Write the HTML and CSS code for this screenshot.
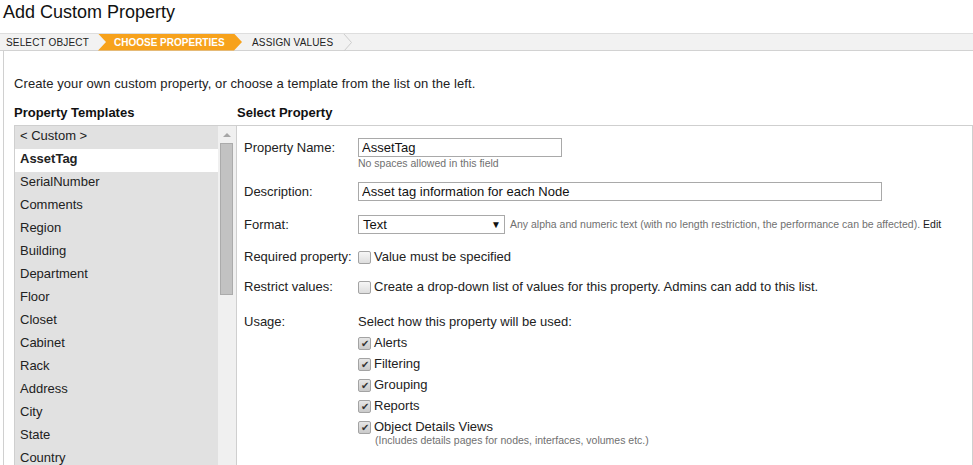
FILE: index.html
```html
<!DOCTYPE html>
<html>
	<head>
		<meta charset="UTF-8">
		<title>Add Custom Property</title>
		<link rel="stylesheet" href="styles.css">
	</head>
	<body>
		<h1 class="title">Add Custom Property</h1>
		<div class="steps">
			<span class="step first">Select Object</span>
			<span class="step current">Choose Properties</span>
			<span class="step">Assign Values</span>
			<svg class="chev" width="10" height="17" viewBox="0 0 10 17"><polyline points="1,0 8.5,8.5 1,17" fill="none" stroke="#cdcdcd"/></svg>
		</div>
		<div class="panel">
			<p class="intro">Create your own custom property, or choose a template from the list on the left.</p>
			<div class="cols">
				<h2>Property Templates</h2>
				<h2>Select Property</h2>
				<div class="templates">
					<ul class="tlist">
						<li>&lt; Custom &gt;</li>
						<li class="sel">AssetTag</li>
						<li>SerialNumber</li>
						<li>Comments</li>
						<li>Region</li>
						<li>Building</li>
						<li>Department</li>
						<li>Floor</li>
						<li>Closet</li>
						<li>Cabinet</li>
						<li>Rack</li>
						<li>Address</li>
						<li>City</li>
						<li>State</li>
						<li>Country</li>
					</ul>
					<div class="scroll">
						<div class="up"></div>
						<div class="thumb"></div>
					</div>
				</div>
				<div class="form">
					<div class="row r1">
						<span class="lbl">Property Name:</span>
						<div>
							<input class="txt name" type="text" value="AssetTag">
							<div class="hint">No spaces allowed in this field</div>
						</div>
					</div>
					<div class="row r2">
						<span class="lbl">Description:</span>
						<input class="txt desc" type="text" value="Asset tag information for each Node">
					</div>
					<div class="row r3">
						<span class="lbl">Format:</span>
						<div class="select"><span>Text</span><span class="arr">&#9660;</span></div>
						<span class="hint side">Any alpha and numeric text (with no length restriction, the performance can be affected). <a class="edit">Edit</a></span>
					</div>
					<div class="row chk r4">
						<span class="lbl">Required property:</span>
						<span class="cb"></span>Value must be specified
					</div>
					<div class="row chk r5">
						<span class="lbl">Restrict values:</span>
						<span class="cb"></span>Create a drop-down list of values for this property. Admins can add to this list.
					</div>
					<div class="row chk">
						<span class="lbl">Usage:</span>
						<div class="usage">
							<div>Select how this property will be used:</div>
							<div class="opt"><span class="cb on"></span>Alerts</div>
							<div class="opt"><span class="cb on"></span>Filtering</div>
							<div class="opt"><span class="cb on"></span>Grouping</div>
							<div class="opt"><span class="cb on"></span>Reports</div>
							<div class="opt"><span class="cb on"></span>Object Details Views</div>
							<div class="hint note">(Includes details pages for nodes, interfaces, volumes etc.)</div>
						</div>
					</div>
				</div>
			</div>
		</div>
	</body>
</html>
```

FILE: styles.css
```css
*{
	margin: 0;
	padding: 0;
	box-sizing: border-box;
}
html,body{
	height: 100%;
	overflow: hidden;
}
body{
	font-family: Arial, "Liberation Sans", sans-serif;
	font-size: 13px;
	color: #222;
	background: #fff;
}
.title{
	font-size: 18px;
	font-weight: normal;
	line-height: 24px;
	height: 33px;
	padding-left: 3px;
	color: #111;
}
/* steps bar */
.steps{
	display: flex;
	align-items: center;
	height: 18px;
	background: #f2f2f2;
	border-top: 1px solid #dedede;
	border-bottom: 1px solid #d2d2d2;
	font-size: 10px;
	letter-spacing: 0.15px;
	text-transform: uppercase;
	color: #222;
}
.step{
	line-height: 17px;
	height: 17px;
}
.first{
	width: 98px;
	padding-left: 6px;
}
.current{
	width: 144px;
	padding-left: 16px;
	letter-spacing: 0;
	background: #f7a21c;
	color: #fff;
	font-weight: bold;
	clip-path: polygon(0 0, 136px 0, 144px 50%, 136px 100%, 0 100%, 8px 50%);
	margin-right: 10px;
}
.chev{
	margin-left: 10px;
}
/* panel */
.panel{
	margin-left: 3px;
	border-left: 1px solid #d0d0d0;
	padding-left: 10px;
	height: 100%;
}
.intro{
	padding-top: 25px;
	line-height: 16px;
	letter-spacing: 0.08px;
}
.cols{
	display: grid;
	grid-template-columns: 222px 1fr;
	margin-top: 13px;
}
h2{
	font-size: 13px;
	font-weight: bold;
	line-height: 16px;
	margin-bottom: 4px;
	color: #111;
}
h2:nth-child(2){
	padding-left: 1px;
}
.templates{
	display: flex;
	height: 340px;
	border-left: 1px solid #cfcfcf;
	border-top: 1px solid #cfcfcf;
	overflow: hidden;
}
.tlist{
	width: 203px;
	list-style: none;
	background: #e1e1e1;
}
.tlist li{
	height: 23px;
	line-height: 19px;
	padding-left: 5px;
}
.tlist .sel{
	background: #fff;
	font-weight: bold;
}
.scroll{
	width: 18px;
	background: #f0f0f0;
	padding-left: 2px;
}
.up{
	width: 0;
	height: 0;
	margin: 7px 0 0 3px;
	border-left: 4px solid transparent;
	border-right: 4px solid transparent;
	border-bottom: 4px solid #a6a6a6;
}
.thumb{
	width: 13px;
	height: 152px;
	margin-top: 6px;
	background: #c2c2c2;
	border: 1px solid #ababab;
}
/* form */
.form{
	height: 340px;
	border: 1px solid #cfcfcf;
	border-bottom: 0;
	padding: 12px 0 0 7px;
}
.row{
	display: flex;
	align-items: flex-start;
	margin-bottom: 14px;
	line-height: 19px;
}
.r1{
	margin-bottom: 13px;
}
.lbl{
	width: 114px;
	flex: none;
}
.txt{
	display: block;
	height: 19px;
	border: 1px solid #a9a9a9;
	font-family: Arial, "Liberation Sans", sans-serif;
	font-size: 13px;
	color: #111;
	padding: 0 3px;
	outline: none;
}
.name{
	width: 204px;
}
.desc{
	width: 524px;
}
.hint{
	font-size: 10.5px;
	line-height: 12px;
	color: #707070;
}
.side{
	line-height: 19px;
	margin-left: 5px;
}
.edit{
	color: #1a1a1a;
}
.select{
	display: flex;
	justify-content: space-between;
	width: 147px;
	height: 19px;
	border: 1px solid #a9a9a9;
	padding: 0 3px 0 4px;
	line-height: 17px;
	color: #111;
}
.arr{
	font-size: 10px;
}
.chk{
	line-height: 16px;
	align-items: center;
}
.r4{
	margin-top: 15px;
}
.chk:last-child{
	align-items: flex-start;
	margin-top: 19px;
}
.cb{
	display: inline-block;
	width: 13px;
	height: 13px;
	margin-right: 3px;
	border: 1px solid #a3a3a3;
	border-radius: 2px;
	background: linear-gradient(#f6f6f6, #dedede);
	text-align: center;
	font-size: 10px;
	line-height: 11px;
	color: #333;
	flex: none;
}
.cb.on{
	background: linear-gradient(#e6e6e6, #cacaca);
}
.cb.on::after{
	content: "\2714";
}
.opt{
	display: flex;
	align-items: center;
	margin-top: 5px;
}
.note{
	padding-left: 17px;
	line-height: 11px;
}
```
